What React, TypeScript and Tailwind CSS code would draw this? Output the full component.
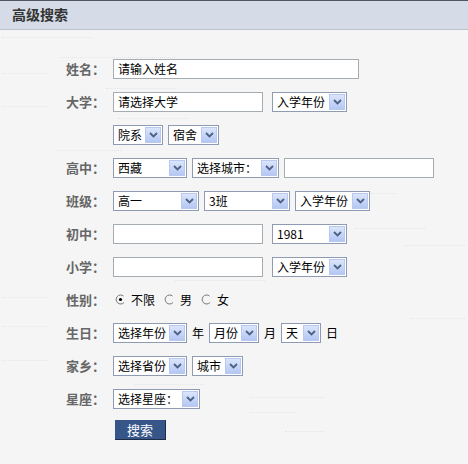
import React from 'react'

const font = { fontFamily: '"Noto Sans CJK SC", "Liberation Sans", sans-serif' }

const Arrow = () => (
  <span className="flex h-[16px] w-[16px] shrink-0 items-center justify-center border border-[#b8c8ee] bg-gradient-to-b from-[#dbe5fb] to-[#b4c7f4]">
    <svg width="9" height="6" viewBox="0 0 9 6">
      <path d="M1 1 L4.5 4.5 L8 1" fill="none" stroke="#4d6185" strokeWidth="1.8" />
    </svg>
  </span>
)

const Select = ({ text, w }: { text: string; w: string }) => (
  <div
    className={`flex h-[20px] items-center justify-between border border-[#8e9bb3] bg-white pl-[4px] pr-[1px] text-[12px] text-black ${w}`}
  >
    <span className="whitespace-nowrap leading-none">{text}</span>
    <Arrow />
  </div>
)

const Input = ({ text = '', w }: { text?: string; w: string }) => (
  <div
    className={`flex h-[20px] items-center border border-[#a5acb2] bg-white px-[4px] text-[12px] text-black ${w}`}
  >
    <span className="leading-none">{text}</span>
  </div>
)

const Row = ({ label, children }: { label?: string; children: React.ReactNode }) => (
  <div className="flex h-[33px] items-center">
    <div className="w-[106px] shrink-0 pr-[1px] text-right text-[13px] font-bold text-[#666]">
      {label ? `${label}：` : ''}
    </div>
    <div className="ml-[7px] flex items-center gap-[5px]">{children}</div>
  </div>
)

const Radio = ({ checked, label }: { checked?: boolean; label: string }) => (
  <span className="mr-[3px] flex items-center gap-[5px] text-[12px] text-black">
    <svg width="11" height="11" viewBox="0 0 11 11">
      <path d="M8.5 2 A4.5 4.5 0 1 0 9 8.5" fill="none" stroke="#777" strokeWidth="1" />
      {checked && <circle cx="5.5" cy="5.5" r="1.6" fill="#000" />}
    </svg>
    {label}
  </span>
)

const Dots = ({ className }: { className: string }) => (
  <div className={`absolute h-0 border-t border-dotted border-[#e2e5ea] ${className}`} />
)

export default function App() {
  return (
    <div className="relative h-[464px] w-[468px] overflow-hidden bg-[#f5f5f5]" style={font}>
      <Dots className="left-[2px] top-[37px] w-[90px]" />
      <Dots className="left-[2px] top-[73px] w-[45px]" />
      <Dots className="left-[2px] top-[106px] w-[45px]" />
      <Dots className="left-[60px] top-[57px] w-[115px]" />
      <Dots className="left-[106px] top-[88px] w-[70px]" />
      <Dots className="left-[56px] top-[150px] w-[65px]" />
      <Dots className="left-[118px] top-[118px] w-[70px]" />
      <Dots className="left-[355px] top-[193px] w-[40px]" />
      <Dots className="left-[355px] top-[228px] w-[70px]" />
      <Dots className="left-[405px] top-[245px] w-[60px]" />
      <Dots className="left-[175px] top-[280px] w-[90px]" />
      <Dots className="left-[2px] top-[297px] w-[45px]" />
      <Dots className="left-[2px] top-[326px] w-[45px]" />
      <Dots className="left-[2px] top-[360px] w-[45px]" />
      <Dots className="left-[135px] top-[384px] w-[70px]" />
      <Dots className="left-[250px] top-[397px] w-[75px]" />
      <Dots className="left-[250px] top-[412px] w-[45px]" />
      <Dots className="left-[285px] top-[431px] w-[40px]" />
      <Dots className="left-[410px] top-[318px] w-[55px]" />

      <div className="h-[30px] border-t border-b border-t-[#4d5560] border-b-[#bcc3cc] bg-[#d5dce7] pl-[12px] text-[14px] font-bold leading-[27px] text-[#333]">
        高级搜索
      </div>

      <div className="relative pt-[22px]">
        <Row label="姓名">
          <Input text="请输入姓名" w="w-[246px]" />
        </Row>
        <Row label="大学">
          <Input text="请选择大学" w="w-[150px]" />
          <div className="ml-[4px]">
            <Select text="入学年份" w="w-[75px]" />
          </div>
        </Row>
        <Row>
          <Select text="院系" w="w-[50px]" />
          <Select text="宿舍" w="w-[51px]" />
        </Row>
        <Row label="高中">
          <Select text="西藏" w="w-[74px]" />
          <Select text="选择城市：" w="w-[87px]" />
          <Input w="w-[150px]" />
        </Row>
        <Row label="班级">
          <Select text="高一" w="w-[86px]" />
          <Select text="3班" w="w-[86px]" />
          <Select text="入学年份" w="w-[75px]" />
        </Row>
        <Row label="初中">
          <Input w="w-[150px]" />
          <div className="ml-[4px]">
            <Select text="1981" w="w-[75px]" />
          </div>
        </Row>
        <Row label="小学">
          <Input w="w-[150px]" />
          <div className="ml-[4px]">
            <Select text="入学年份" w="w-[75px]" />
          </div>
        </Row>
        <Row label="性别">
          <div className="ml-[2px] flex items-center gap-[6px]">
            <Radio checked label="不限" />
            <Radio label="男" />
            <Radio label="女" />
          </div>
        </Row>
        <Row label="生日">
          <Select text="选择年份" w="w-[74px]" />
          <span className="text-[12px] text-black">年</span>
          <Select text="月份" w="w-[50px]" />
          <span className="text-[12px] text-black">月</span>
          <Select text="天" w="w-[40px]" />
          <span className="text-[12px] text-black">日</span>
        </Row>
        <Row label="家乡">
          <Select text="选择省份" w="w-[74px]" />
          <Select text="城市" w="w-[51px]" />
        </Row>
        <Row label="星座">
          <Select text="选择星座：" w="w-[87px]" />
        </Row>
        <div className="-mt-[2px]">
          <Row>
            <button className="ml-[2px] h-[20px] w-[51px] border-r border-b border-r-[#1d2d45] border-b-[#1d2d45] bg-[#365689] text-[13px] text-white">
              搜索
            </button>
          </Row>
        </div>
      </div>
    </div>
  )
}
